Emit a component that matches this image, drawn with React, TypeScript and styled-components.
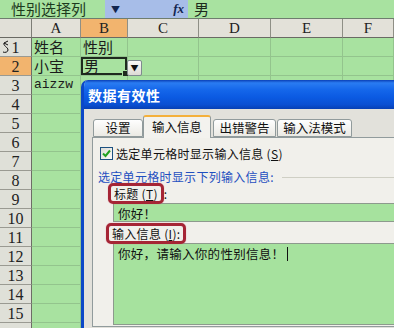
import * as React from 'react'
import styled, { createGlobalStyle } from 'styled-components'

const CJK = `"Noto Sans CJK SC", "Noto Sans", sans-serif`

const GlobalStyle = createGlobalStyle`
  html, body {
    margin: 0;
    padding: 0;
    background: #a8e2a0;
    overflow: hidden;
  }
  * {
    box-sizing: border-box;
  }
`

const Screen = styled.div`
  position: relative;
  width: 394px;
  height: 328px;
  overflow: hidden;
  background: #a8e2a0;
  font-family: ${CJK};
`

// ---- formula bar ----
const FormulaBar = styled.div`
  display: flex;
  height: 19px;
  border-bottom: 1px solid #6f7d6f;
`
const NameBox = styled.div`
  width: 105px;
  padding-left: 11px;
  font-size: 15px;
  line-height: 18px;
  color: #1d3a1d;
  background: #a8e2a0;
`
const NameDrop = styled.div`
  width: 83px;
  display: flex;
  align-items: center;
  justify-content: space-between;
  padding: 0 4px 0 6px;
  background: #a7bde8;
  color: #12254f;
`
const DropArrow = styled.span`
  font-size: 9px;
`
const Fx = styled.span`
  font-family: "Liberation Serif", serif;
  font-style: italic;
  font-size: 13px;
  font-weight: bold;
`
const FormulaText = styled.div`
  flex: 1;
  padding-left: 6px;
  font-size: 15px;
  line-height: 18px;
  color: #1d2a1d;
`

// ---- sheet ----
const Sheet = styled.div`
  display: grid;
  grid-template-columns: 32px 49px 47px 71px 72px 72px 1fr;
  grid-auto-rows: 19px;
`
const Corner = styled.div`
  background: #e1e0d8;
  border-right: 1px solid #7d7d76;
  border-bottom: 1px solid #6a6a64;
`
const ColHead = styled.div<{ $active?: boolean }>`
  background: ${(p) => (p.$active ? '#f2b46e' : '#e3e1d9')};
  border-right: 1px solid #8f8f86;
  border-bottom: 1px solid #6a6a64;
  font-family: "Liberation Serif", serif;
  font-size: 15px;
  line-height: 18px;
  text-align: center;
  color: #222;
`
const RowHead = styled.div<{ $active?: boolean }>`
  position: relative;
  background: ${(p) => (p.$active ? '#f2b46e' : '#dfe0d8')};
  border-right: 1px solid #6d6d66;
  border-bottom: 1px solid #9a9a92;
  font-family: "Liberation Serif", serif;
  font-size: 16px;
  line-height: 19px;
  text-align: center;
  color: #222;
`
const Cell = styled.div<{ $mono?: boolean; $selected?: boolean }>`
  position: relative;
  border-right: 1px solid #93c48d;
  border-bottom: 1px solid #93c48d;
  padding-left: 2px;
  font-family: ${(p) => (p.$mono ? '"Liberation Mono", monospace' : CJK)};
  font-size: ${(p) => (p.$mono ? '13px' : '15px')};
  line-height: 18px;
  color: #1b1b1b;
  white-space: nowrap;
  ${(p) =>
    p.$selected &&
    `
    box-shadow: inset 0 0 0 2px #1e2a1e;
    padding-left: 3px;
    &::after {
      content: '';
      position: absolute;
      right: -2px;
      bottom: -2px;
      width: 5px;
      height: 5px;
      background: #1e2a1e;
      border: 1px solid #a8e2a0;
    }
  `}
`
const DropButton = styled.div`
  position: absolute;
  left: 100%;
  top: 3px;
  width: 15px;
  height: 16px;
  background: linear-gradient(#fbfbf8, #dcdbd4);
  border: 1px solid #7f8a8f;
  border-radius: 2px;
  font-size: 8px;
  line-height: 14px;
  text-align: center;
  color: #111;
  z-index: 2;
`
const Cursor = styled.svg`
  position: absolute;
  left: 2px;
  top: 2px;
`

// ---- dialog ----
const Dialog = styled.div`
  position: absolute;
  left: 81px;
  top: 80px;
  width: 340px;
  height: 249px;
  display: flex;
  flex-direction: column;
  background: #e2e1db;
  border-left: 3px solid #0b48c8;
  border-top-left-radius: 7px;
  overflow: hidden;
`
const TitleBar = styled.div`
  height: 29px;
  flex-shrink: 0;
  display: flex;
  align-items: center;
  padding-left: 4px;
  background: linear-gradient(
    #0a3fb6 0%,
    #2a7cf2 10%,
    #1466ea 35%,
    #0b5ae2 60%,
    #0a4fd2 85%,
    #0740b4 100%
  );
  color: #fff;
  font-size: 14px;
  font-weight: bold;
  letter-spacing: 0.5px;
`
const DialogBody = styled.div`
  flex: 1;
  display: flex;
  flex-direction: column;
  padding: 6px 0 2px 8px;
`
const Tabs = styled.div`
  display: flex;
  align-items: flex-end;
  height: 22px;
  padding-left: 1px;
`
const Tab = styled.div<{ $w: number; $active?: boolean; $gap?: number }>`
  width: ${(p) => p.$w}px;
  margin-left: ${(p) => p.$gap || 0}px;
  height: ${(p) => (p.$active ? 23 : 18)}px;
  margin-bottom: ${(p) => (p.$active ? -1 : 0)}px;
  position: relative;
  z-index: ${(p) => (p.$active ? 2 : 1)};
  border: 1px solid #919b9c;
  border-bottom: ${(p) => (p.$active ? 'none' : '1px solid #919b9c')};
  border-top: ${(p) => (p.$active ? '2px solid #f4b03c' : '1px solid #919b9c')};
  border-radius: 3px 3px 0 0;
  background: ${(p) =>
    p.$active ? '#f3f2ee' : 'linear-gradient(#fefefe, #ebeae4)'};
  font-size: 12.5px;
  line-height: ${(p) => (p.$active ? 19 : 16)}px;
  text-align: center;
  color: #111;
`
const Panel = styled.div`
  flex: 1;
  display: flex;
  flex-direction: column;
  padding: 0 0 0 5px;
  background: #f1f0eb;
  border: 1px solid #919b9c;
  font-size: 12px;
  letter-spacing: 0.3px;
  color: #111;
  overflow: hidden;
`
const CheckRow = styled.div`
  display: flex;
  align-items: center;
  gap: 3px;
  margin-top: 8px;
  padding-left: 2px;
  height: 14px;
`
const CheckBox = styled.div`
  width: 13px;
  height: 13px;
  border: 1px solid #1c5180;
  background: linear-gradient(135deg, #dcdcd6, #fbfbf9);
  display: flex;
  align-items: center;
  justify-content: center;
`
const Group = styled.div`
  display: flex;
  align-items: center;
  margin-top: 9px;
  height: 15px;
  color: #1f4fc0;
`
const GroupLine = styled.div`
  flex: 1;
  margin-left: 8px;
  margin-top: 2px;
  border-top: 1px solid #cfcfc4;
`
const Label = styled.div<{ $indent: number; $top: number }>`
  display: flex;
  align-items: center;
  margin-left: ${(p) => p.$indent}px;
  margin-top: ${(p) => p.$top}px;
  position: relative;
  z-index: 2;
`
const Mark = styled.span`
  display: inline-block;
  height: 21px;
  padding: 0 3px 0 3px;
  border: 3px solid #a52535;
  border-radius: 5px;
  line-height: 15px;
  box-shadow: 0 0 1px #d07080;
`
const Key = styled.span`
  text-decoration: underline;
`
const Field = styled.div<{ $h: number; $top: number }>`
  flex-shrink: 0;
  margin-left: 15px;
  margin-top: ${(p) => p.$top}px;
  height: ${(p) => p.$h}px;
  padding: 1px 0 0 4px;
  background: #a6e29e;
  border: 1px solid #8d9a8d;
  border-right: none;
  font-size: 12.5px;
  line-height: 17px;
  color: #111;
`
const Caret = styled.span`
  display: inline-block;
  width: 1px;
  height: 14px;
  margin-left: 3px;
  vertical-align: -2px;
  background: #111;
`

const rows: [string, string, boolean?][] = [
  ['姓名', '性别'],
  ['小宝', '男'],
  ['aizzw', '', true],
]

export default function App() {
  const cols = ['A', 'B', 'C', 'D', 'E', 'F']
  const rowNums = Array.from({ length: 16 }, (_, i) => i + 1)
  return (
    <>
      <GlobalStyle />
      <Screen>
        <FormulaBar>
          <NameBox>性别选择列</NameBox>
          <NameDrop>
            <DropArrow>▼</DropArrow>
            <Fx>fx</Fx>
          </NameDrop>
          <FormulaText>男</FormulaText>
        </FormulaBar>
        <Sheet>
          <Corner />
          {cols.map((c) => (
            <ColHead key={c} $active={c === 'B'}>
              {c}
            </ColHead>
          ))}
          {rowNums.map((n) => {
            const data = rows[n - 1]
            return (
              <React.Fragment key={n}>
                <RowHead $active={n === 2}>
                  {n === 1 && (
                    <Cursor width="8" height="14" viewBox="0 0 8 14">
                      <path
                        d="M6 1 L2 3 L6 5 M2 3 C1 6, 6 7, 6 10 C6 12, 3 13, 1 12"
                        fill="none"
                        stroke="#111"
                        strokeWidth="1"
                      />
                    </Cursor>
                  )}
                  {n < 16 ? n : ''}
                </RowHead>
                <Cell $mono={data?.[2]}>{data?.[0]}</Cell>
                <Cell $selected={n === 2}>
                  {data?.[1]}
                  {n === 2 && <DropButton>▼</DropButton>}
                </Cell>
                <Cell />
                <Cell />
                <Cell />
                <Cell />
              </React.Fragment>
            )
          })}
        </Sheet>

        <Dialog>
          <TitleBar>数据有效性</TitleBar>
          <DialogBody>
            <Tabs>
              <Tab $w={50}>设置</Tab>
              <Tab $w={68} $active>
                输入信息
              </Tab>
              <Tab $w={63} $gap={2}>
                出错警告
              </Tab>
              <Tab $w={75} $gap={1}>
                输入法模式
              </Tab>
            </Tabs>
            <Panel>
              <CheckRow>
                <CheckBox>
                  <svg width="9" height="9" viewBox="0 0 9 9">
                    <path
                      d="M1 4.5 L3.5 7 L8 1.5"
                      fill="none"
                      stroke="#21a121"
                      strokeWidth="2"
                    />
                  </svg>
                </CheckBox>
                <span>
                  选定单元格时显示输入信息 (<Key>S</Key>)
                </span>
              </CheckRow>
              <Group>
                选定单元格时显示下列输入信息:
                <GroupLine />
              </Group>
              <Label $indent={10} $top={-1}>
                <Mark>
                  标题 (<Key>T</Key>)
                </Mark>
                <span>:</span>
              </Label>
              <Field $h={19} $top={-1}>
                你好！
              </Field>
              <Label $indent={8} $top={1}>
                <Mark>
                  输入信息 (<Key>I</Key>):
                </Mark>
              </Label>
              <Field $h={82} $top={-1}>
                你好，请输入你的性别信息！
                <Caret />
              </Field>
            </Panel>
          </DialogBody>
        </Dialog>
      </Screen>
    </>
  )
}
